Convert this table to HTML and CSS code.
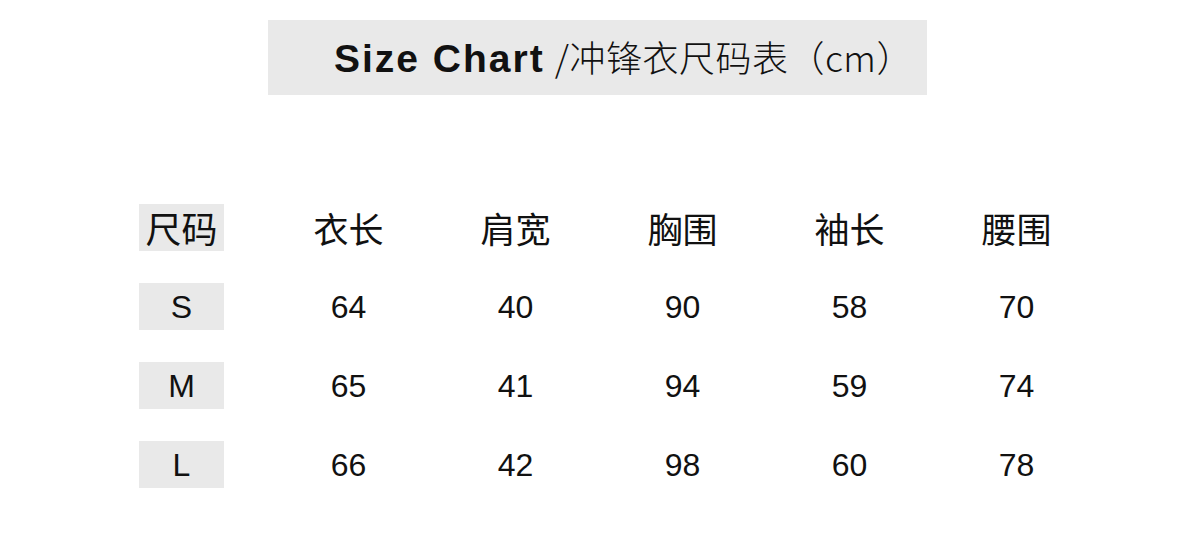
FILE: index.html
```html
<!DOCTYPE html>
<html lang="zh">
<head>
<meta charset="utf-8">
<title>Size Chart</title>
<link rel="stylesheet" href="styles.css">
</head>
<body>
<div class="page">
  <header class="title-bar">
    <h1 class="title"><span class="title-en">Size Chart</span><span class="title-cn">/冲锋衣尺码表（cm）</span></h1>
  </header>
  <div class="chart">
    <div class="cell"><span class="label cn">尺码</span></div>
    <div class="cell cn">衣长</div>
    <div class="cell cn">肩宽</div>
    <div class="cell cn">胸围</div>
    <div class="cell cn">袖长</div>
    <div class="cell cn">腰围</div>

    <div class="cell"><span class="label">S</span></div>
    <div class="cell num">64</div>
    <div class="cell num">40</div>
    <div class="cell num">90</div>
    <div class="cell num">58</div>
    <div class="cell num">70</div>

    <div class="cell"><span class="label">M</span></div>
    <div class="cell num">65</div>
    <div class="cell num">41</div>
    <div class="cell num">94</div>
    <div class="cell num">59</div>
    <div class="cell num">74</div>

    <div class="cell"><span class="label">L</span></div>
    <div class="cell num">66</div>
    <div class="cell num">42</div>
    <div class="cell num">98</div>
    <div class="cell num">60</div>
    <div class="cell num">78</div>
  </div>
</div>
</body>
</html>
```

FILE: styles.css
```css
* { box-sizing: border-box; }
html, body {
  margin: 0;
  padding: 0;
  background: #ffffff;
}
body {
  width: 1200px;
  height: 558px;
  overflow: hidden;
  font-family: "Liberation Sans", Arial, "Noto Sans CJK SC", sans-serif;
  color: #111111;
}
.page {
  padding-top: 20px;
}
.title-bar {
  margin-left: 268px;
  width: 659px;
  height: 75px;
  background: #e9e9e9;
  display: flex;
  align-items: center;
  padding-left: 66px;
  padding-bottom: 3px;
}
.title {
  margin: 0;
  font-weight: normal;
  display: flex;
  align-items: baseline;
  white-space: nowrap;
}
.title-en {
  font-family: "Liberation Sans", Arial, sans-serif;
  font-weight: bold;
  font-size: 39px;
  letter-spacing: 2px;
}
.title-cn {
  font-family: "Noto Sans CJK SC", sans-serif;
  font-weight: 300;
  font-size: 36px;
  letter-spacing: 0.5px;
  margin-left: 10px;
}
.chart {
  margin-top: 109px;
  margin-left: 98px;
  display: grid;
  grid-template-columns: repeat(6, 167px);
  grid-auto-rows: 79px;
}
.cell {
  display: flex;
  align-items: flex-start;
  justify-content: center;
  font-size: 32px;
  line-height: 48px;
}
.cn {
  font-family: "Noto Sans CJK SC", sans-serif;
  font-weight: 400;
  font-size: 35px;
}
.label {
  display: block;
  width: 85px;
  height: 47px;
  background: #e9e9e9;
  text-align: center;
  line-height: 48px;
}
.label.cn {
  font-size: 36px;
  line-height: 46px;
}
.num {
  font-family: "Liberation Sans", Arial, sans-serif;
}
```
